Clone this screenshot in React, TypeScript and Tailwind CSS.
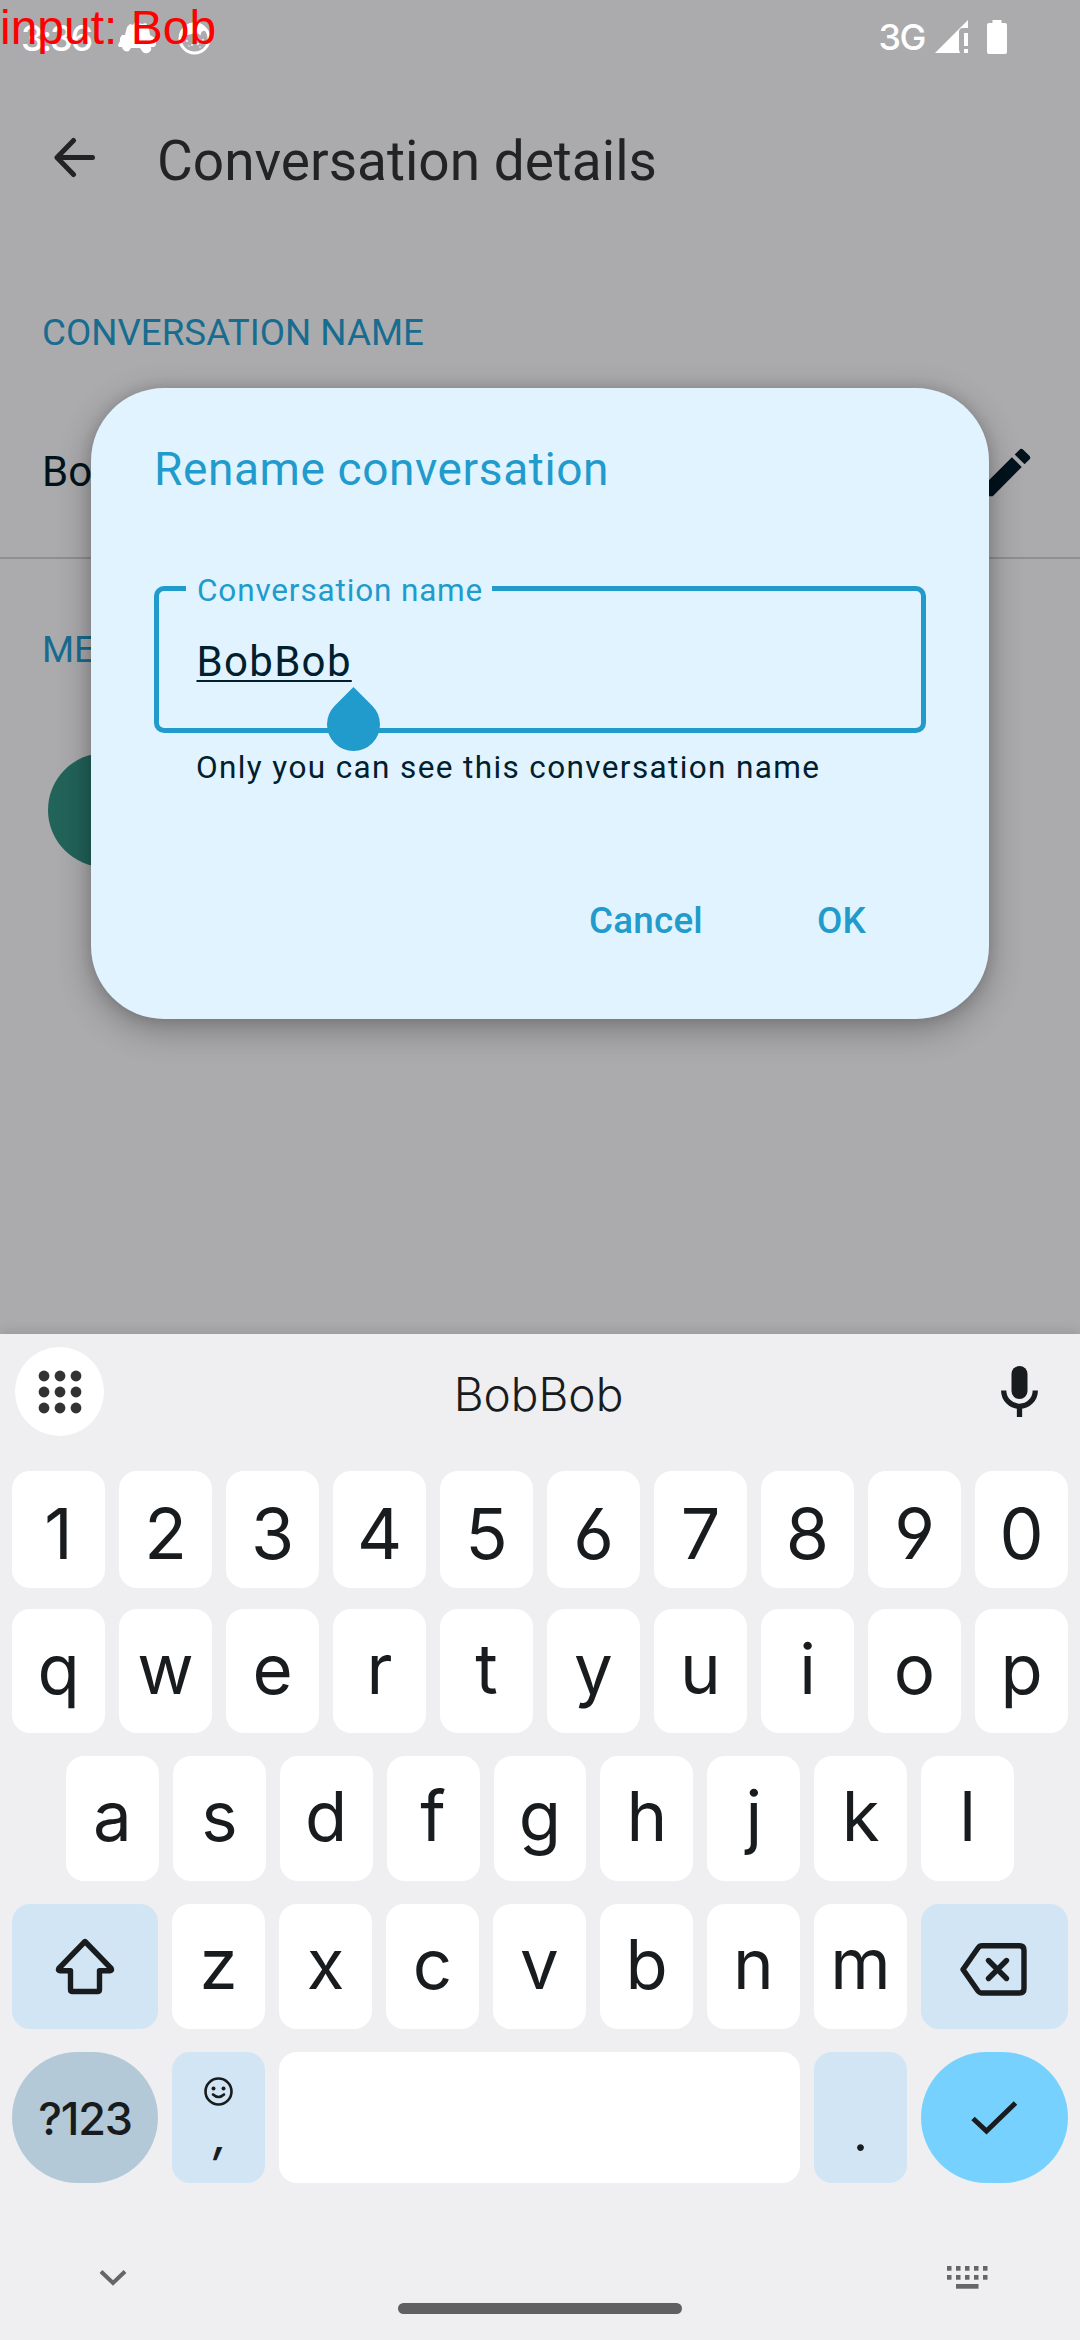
import React from "react";

const keyFont = "font-[Inter,sans-serif] [font-feature-settings:'cv03','cv04']";
const KEY_INK = "#191c1e";

function StatusBar() {
  return (
    <header className="relative flex h-[76px] items-start justify-between text-white">
      <div className="flex items-center pt-[14px] pl-[21px]">
        <span className="w-[97px] font-[Inter,sans-serif] text-[36px] leading-[48px] font-medium tracking-[-2.200px]">3:36</span>
        <svg className="h-[32px] w-[38px]" viewBox="0 0 38 32" fill="currentColor">
          <path d="M9 5l3-3 3 1 2-3 4 1 3 1 4-1 3 6 1 6 5 3v3l1 1v3l-2 2h-3a5 5 0 0 1-9 4l-2-3H13l-2 3a5 5 0 0 1-7-4H1l-1-2 2-4v-3l2-3h3z" />
        </svg>
        <svg className="ml-[22px] h-[34px] w-[34px]" viewBox="0 0 34 34" fill="none" stroke="currentColor" strokeWidth="3">
          <ellipse cx="16.500" cy="17.500" rx="14.500" ry="14.500" />
          <path d="M2.500 15.500C3 7 9 1.500 17 1.500S30 7 31.500 15c-2-4-4-6-6.500-5-2 .8-2 2.500-2.500 4.500-3-3-6-3-9-1.500-3.500 1.500-7 1-11 2.500z" fill="currentColor" stroke="none" />
          <g fill="currentColor" stroke="none">
            <circle cx="9" cy="20" r="0.900" />
            <circle cx="14" cy="24" r="0.900" />
            <circle cx="11" cy="25" r="0.700" />
            <circle cx="20" cy="23" r="0.900" />
            <circle cx="25" cy="19" r="0.900" />
            <circle cx="17" cy="19" r="0.700" />
            <circle cx="22" cy="26" r="0.700" />
          </g>
        </svg>
      </div>
      <div className="flex items-start pt-[13px] pr-[73px]">
        <span className="mr-[10px] font-[Inter,sans-serif] text-[36px] leading-[48px] font-medium tracking-[-1.500px]">3G</span>
        <svg className="mt-[7px] h-[34px] w-[34px]" viewBox="0 0 34 34" fill="currentColor">
          <path d="M0 33L33 0v8h-6l-2 1-1 2v19l1 3zM29 13h4v13h-4zM29 29h4v4h-4z" />
        </svg>
        <svg className="ml-[18px] mt-[7px] h-[34px] w-[20px]" viewBox="0 0 20 34" fill="currentColor">
          <path d="M5.500 0h9v3H18a2 2 0 0 1 2 2v27a2 2 0 0 1-2 2H2a2 2 0 0 1-2-2V5a2 2 0 0 1 2-2h3.500z" />
        </svg>
      </div>
      <div className="absolute top-0 left-0 whitespace-nowrap font-['Liberation_Sans',sans-serif] text-[48px] leading-[55px] text-[#ff0000]">
        input: Bob
      </div>
    </header>
  );
}

function DetailsPage() {
  return (
    <div className="flex flex-col">
      <div className="flex h-[171px] items-start pt-[55px] pl-[54px]">
        <svg className="mt-[6px] h-[42px] w-[42px]" viewBox="0 0 42 42" fill="none" stroke="#222323" strokeWidth="5" strokeLinecap="round" strokeLinejoin="round">
          <path d="M38.500 20.500H3M19.500 3.500L3 20.500l16.500 17" />
        </svg>
        <h1 className="ml-[61px] text-[55px] leading-[60px] whitespace-nowrap text-[#222323]">Conversation details</h1>
      </div>
      <div className="pt-[66px] pl-[42px] text-[36.750px] leading-[40px] text-[#176c90]">CONVERSATION NAME</div>
      <div className="flex h-[206px] items-center justify-between border-b-2 border-[#8f8f91] pt-[34px] pr-[42px] pb-0 pl-[42px]">
        <span className="text-[42px] leading-[48px] text-[#00131c]">Bob</span>
        <svg className="h-[63px] w-[63px]" viewBox="0 0 24 24" fill="#00131c">
          <path d="M3 17.250V21h3.750L17.810 9.940l-3.750-3.750L3 17.250zM20.710 7.040a1 1 0 0 0 0-1.410l-2.340-2.340a1 1 0 0 0-1.410 0l-1.830 1.830 3.750 3.750 1.830-1.830z" />
        </svg>
      </div>
      <div className="pt-[71px] pl-[42px] text-[36.750px] leading-[40px] text-[#176c90]">MEMBERS</div>
      <div className="mt-[83px] ml-[48px] h-[114px] w-[114px] rounded-full bg-[#22635a]" />
    </div>
  );
}

function RenameDialog() {
  return (
    <section className="absolute top-[388px] left-[91px] flex h-[631px] w-[898px] flex-col rounded-[73px] bg-[#e0f3ff] px-[63px] pt-[53px] shadow-[0_10px_34px_rgba(0,0,0,0.3),0_0_14px_rgba(0,0,0,0.12)]">
      <h2 className="text-[46px] leading-[56px] tracking-[0.600px] text-[#219bcc]">Rename conversation</h2>
      <div className="relative mt-[89px] h-[147px] rounded-[10px] border-[5px] border-[#219bcc] pt-[47px] pl-[37.500px]">
        <span className="absolute top-[-20px] left-[27px] w-[306px] bg-[#e0f3ff] pl-[11px] text-[31.500px] leading-[40px] tracking-[0.850px] whitespace-nowrap text-[#219bcc]">
          Conversation name
        </span>
        <span className="block text-[42px] leading-[48px] tracking-[1.310px] text-[#00202e] underline decoration-2 underline-offset-[4px]">BobBob</span>
        <span className="absolute top-[107px] left-[168px] h-[53px] w-[53px] rotate-45 rounded-full rounded-tl-none bg-[#219bcc]" />
      </div>
      <p className="mt-[17px] pl-[42px] text-[31.500px] leading-[36px] tracking-[1.380px] whitespace-nowrap text-[#00202e]">
        Only you can see this conversation name
      </p>
      <div className="mt-[114px] flex justify-end gap-[114px] pr-[60px] text-[36.750px] leading-[42px] font-medium tracking-[0.250px] text-[#219bcc]">
        <button>Cancel</button>
        <button>OK</button>
      </div>
    </section>
  );
}

function Key({ label, digit }: { label: string; digit?: boolean }) {
  return (
    <div className={`flex min-w-0 flex-1 justify-center rounded-[18px] bg-white ${digit ? "pt-[23px]" : "pt-[19px]"}`}>
      <span className={digit ? "text-[70px] leading-[80px]" : "text-[69px] leading-[82px]"}>{label}</span>
    </div>
  );
}

function Keyboard() {
  return (
    <section className={`relative flex h-[1006px] flex-col bg-[#efeff1] px-[12px] text-[#191c1e] shadow-[0_-2px_12px_rgba(0,0,0,0.12)] ${keyFont}`}>
      <div className="flex h-[137px] items-start pt-[13px] pr-[30px] pl-[3px]">
        <div className="flex h-[89px] w-[89px] items-center justify-center rounded-full bg-white">
          <svg className="h-[44px] w-[44px]" viewBox="0 0 44 44" fill="#333333">
            {[6, 22, 38].map((y) => [6, 22, 38].map((x) => <circle key={`${x}-${y}`} cx={x} cy={y} r="5.400" />))}
          </svg>
        </div>
        <span className="mt-[19px] flex-1 pr-[28px] text-center text-[46px] leading-[56px] font-light">BobBob</span>
        <svg className="mt-[19px] h-[52px] w-[37px]" viewBox="0 0 37 52">
          <rect x="10.500" y="0" width="16" height="33" rx="8" fill={KEY_INK} />
          <path d="M2.700 24.500a15.800 15.800 0 0 0 31.600 0M18.500 41v10" fill="none" stroke={KEY_INK} strokeWidth="5.300" />
        </svg>
      </div>
      <div className="flex h-[117px] gap-[14px]">
        {"1234567890".split("").map((k) => (
          <Key key={k} label={k} digit />
        ))}
      </div>
      <div className="mt-[21px] flex h-[124px] gap-[14px]">
        {"qwertyuiop".split("").map((k) => (
          <Key key={k} label={k} />
        ))}
      </div>
      <div className="mt-[23px] flex h-[125px] gap-[14px] px-[54px]">
        {"asdfghjkl".split("").map((k) => (
          <Key key={k} label={k} />
        ))}
      </div>
      <div className="mt-[23px] flex h-[125px] gap-[14px]">
        <div className="flex w-[146px] items-center justify-center rounded-[18px] bg-[#d2e5f4]">
          <svg className="h-[58px] w-[60px]" viewBox="0 0 60 58" fill="none" stroke={KEY_INK} strokeWidth="5.400" strokeLinejoin="round">
            <path d="M30 3.500L3.800 30.500q-1 2.200 1 2.200H15.500V51.500q0 2 2 2h25q2 0 2-2V32.700H55.200q2 0 1-2.200z" />
          </svg>
        </div>
        {"zxcvbnm".split("").map((k) => (
          <Key key={k} label={k} />
        ))}
        <div className="flex w-[147px] items-center justify-center rounded-[18px] bg-[#d2e5f4]">
          <svg className="mt-[5px] mr-[2px] h-[53px] w-[67px]" viewBox="0 0 67 53" fill="none" stroke={KEY_INK} strokeWidth="5.400" strokeLinejoin="round" strokeLinecap="round">
            <path d="M22 2.800H59.500q4.500 0 4.500 4.500V45.500q0 4.500-4.500 4.500H22q-2.500 0-4-2L3 26.500L18 5q1.500-2.200 4-2.200z" />
            <path d="M28.500 17.500L46.500 35.500M46.500 17.500L28.500 35.500" />
          </svg>
        </div>
      </div>
      <div className="mt-[23px] flex h-[131px] gap-[14px]">
        <div className="flex w-[146px] justify-center rounded-full bg-[#b4c9d7] pt-[39px]">
          <span className="text-[45px] leading-[56px] font-medium tracking-[-1.200px]">?123</span>
        </div>
        <div className="flex w-[93px] flex-col items-center rounded-[18px] bg-[#d2e5f4] pt-[25px]">
          <svg className="h-[29px] w-[29px]" viewBox="0 0 29 29" fill="none" stroke={KEY_INK} strokeWidth="2.600">
            <circle cx="14.500" cy="14.500" r="13" />
            <circle cx="9.500" cy="11.500" r="2" fill={KEY_INK} stroke="none" />
            <circle cx="19.500" cy="11.500" r="2" fill={KEY_INK} stroke="none" />
            <path d="M9 17.500q5.500 5 11 0" strokeLinecap="round" />
          </svg>
          <span className="mt-[1px] pl-[4px] text-[46px] leading-[56px] font-medium italic">,</span>
        </div>
        <div className="w-[521px] rounded-[18px] bg-white" />
        <div className="flex w-[93px] justify-center rounded-[18px] bg-[#d2e5f4] pt-[53px]">
          <span className="text-[52px] leading-[56px]">.</span>
        </div>
        <div className="flex w-[147px] items-center justify-center rounded-full bg-[#76d1ff]">
          <svg className="mt-[1px] h-[34px] w-[47px]" viewBox="0 0 47 34" fill="none" stroke={KEY_INK} strokeWidth="5">
            <path d="M2 17.500L15.500 30L44.500 2" />
          </svg>
        </div>
      </div>
      <div className="mt-[82px] flex justify-between pr-[80px] pl-[87px]">
        <svg className="mt-[4px] h-[18px] w-[28px]" viewBox="0 0 28 18" fill="none" stroke="#666666" strokeWidth="4">
          <path d="M2 2.500L14 14L26 2.500" />
        </svg>
        <svg className="h-[26px] w-[41px]" viewBox="0 0 41 26" fill="#666666">
          {[1, 10].map((y) => [0, 9, 18, 27, 36].map((x) => <rect key={`${x}-${y}`} x={x} y={y} width="4.500" height="4.700" />))}
          <rect x="9" y="19" width="22.500" height="4.700" />
        </svg>
      </div>
      <div className="mx-auto mt-[12px] h-[11px] w-[284px] rounded-full bg-[#606060]" />
    </section>
  );
}

export default function App() {
  return (
    <main className="h-[2340px] w-[1080px] overflow-hidden bg-[#ababad] font-[Roboto,sans-serif]">
      <div className="relative h-[1334px] overflow-hidden">
        <StatusBar />
        <DetailsPage />
        <RenameDialog />
      </div>
      <Keyboard />
    </main>
  );
}
